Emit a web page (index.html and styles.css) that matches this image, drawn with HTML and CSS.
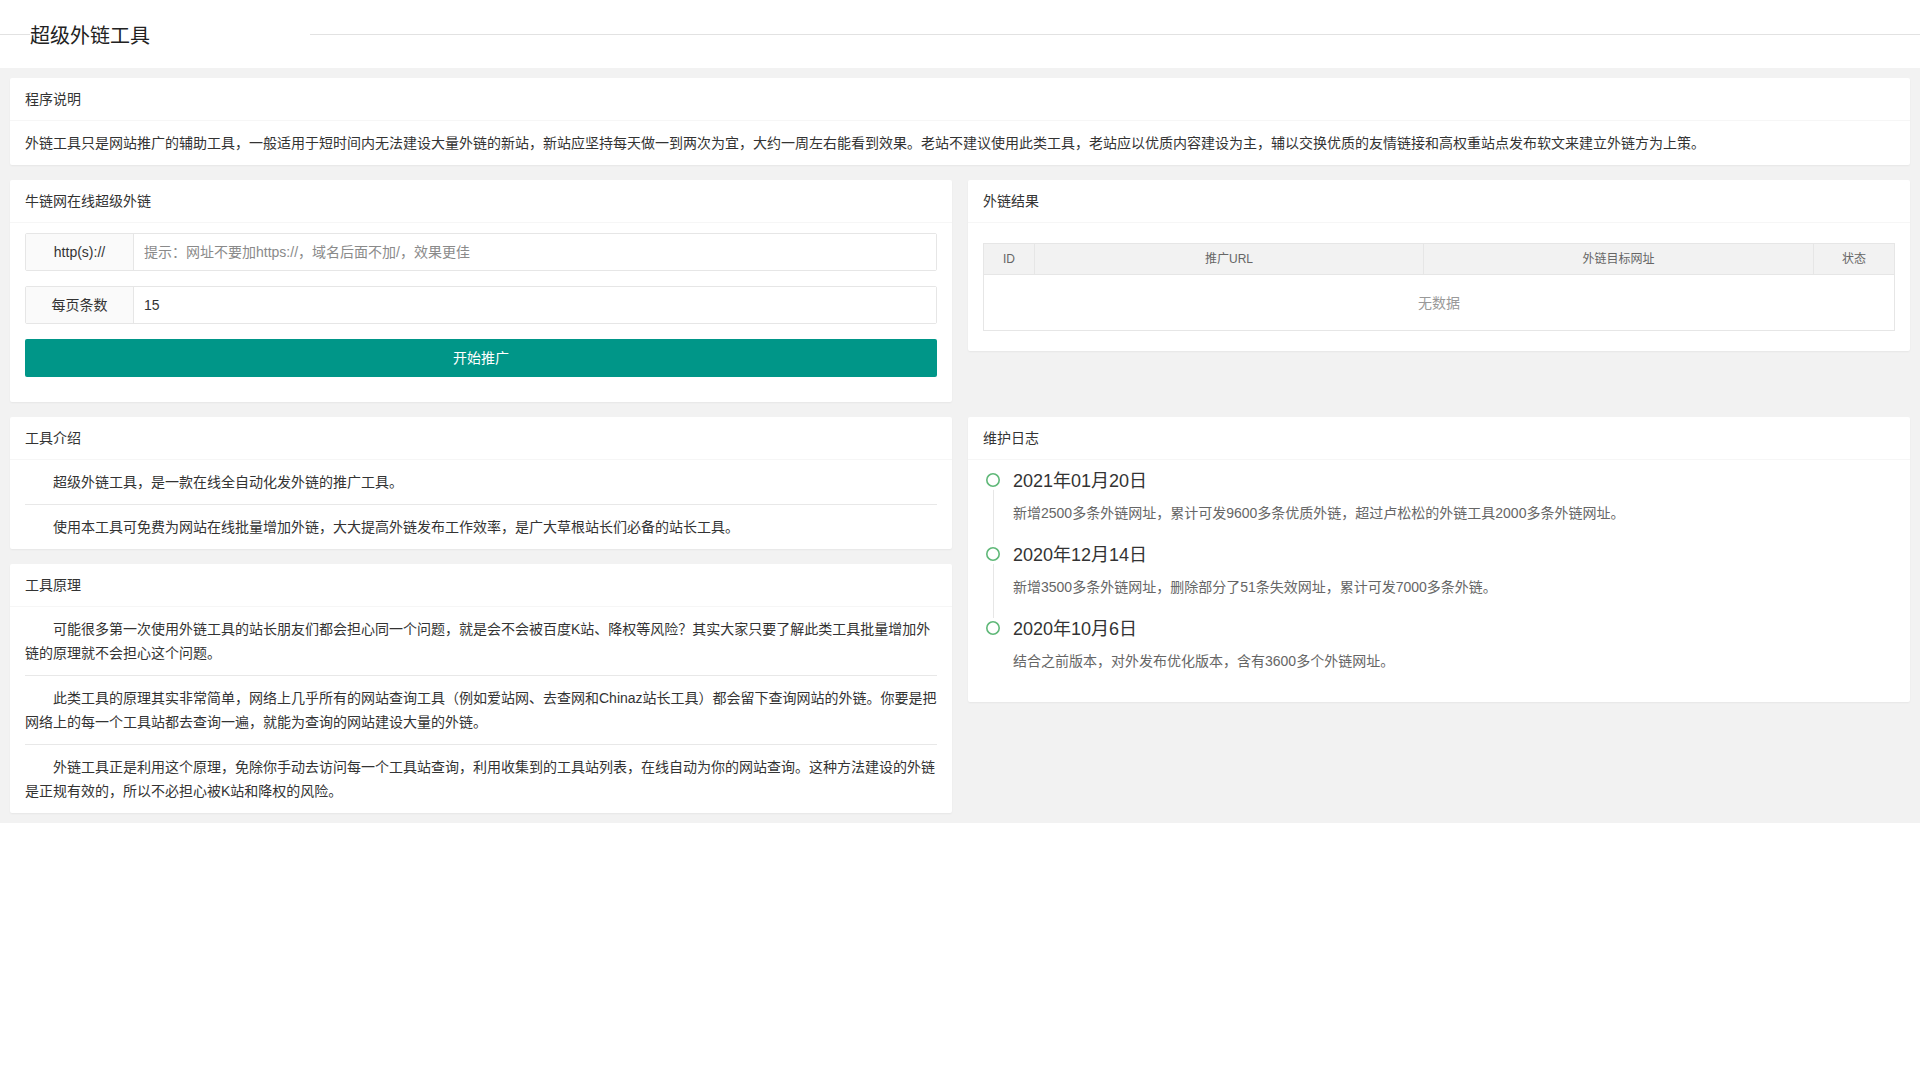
FILE: index.html
```html
<!DOCTYPE html>
<html lang="zh-CN">
<head>
<meta charset="utf-8">
<title>超级外链工具</title>
<link rel="stylesheet" href="styles.css">
</head>
<body>
<header class="topbar">
  <div class="brand">超级外链工具</div>
</header>
<main class="page">
  <section class="card">
    <div class="card-header">程序说明</div>
    <div class="card-body">外链工具只是网站推广的辅助工具，一般适用于短时间内无法建设大量外链的新站，新站应坚持每天做一到两次为宜，大约一周左右能看到效果。老站不建议使用此类工具，老站应以优质内容建设为主，辅以交换优质的友情链接和高权重站点发布软文来建立外链方为上策。</div>
  </section>

  <div class="grid">
    <section class="card">
      <div class="card-header">牛链网在线超级外链</div>
      <div class="card-body form-body">
        <div class="input-group">
          <span class="input-label">http(s)://</span>
          <input class="input" type="text" placeholder="提示：网址不要加https://，域名后面不加/，效果更佳">
        </div>
        <div class="input-group">
          <span class="input-label">每页条数</span>
          <input class="input" type="text" value="15">
        </div>
        <button class="btn" type="button">开始推广</button>
      </div>
    </section>

    <section class="card">
      <div class="card-header">外链结果</div>
      <div class="card-body">
        <table class="table">
          <colgroup>
            <col class="c-id"><col class="c-url"><col class="c-target"><col class="c-status">
          </colgroup>
          <thead>
            <tr><th>ID</th><th>推广URL</th><th>外链目标网址</th><th>状态</th></tr>
          </thead>
          <tbody>
            <tr><td class="empty" colspan="4">无数据</td></tr>
          </tbody>
        </table>
      </div>
    </section>

    <div class="col">
      <section class="card">
        <div class="card-header">工具介绍</div>
        <div class="card-body list-body">
          <p>超级外链工具，是一款在线全自动化发外链的推广工具。</p>
          <p>使用本工具可免费为网站在线批量增加外链，大大提高外链发布工作效率，是广大草根站长们必备的站长工具。</p>
        </div>
      </section>
      <section class="card">
        <div class="card-header">工具原理</div>
        <div class="card-body list-body">
          <p>可能很多第一次使用外链工具的站长朋友们都会担心同一个问题，就是会不会被百度K站、降权等风险？其实大家只要了解此类工具批量增加外链的原理就不会担心这个问题。</p>
          <p>此类工具的原理其实非常简单，网络上几乎所有的网站查询工具（例如爱站网、去查网和Chinaz站长工具）都会留下查询网站的外链。你要是把网络上的每一个工具站都去查询一遍，就能为查询的网站建设大量的外链。</p>
          <p>外链工具正是利用这个原理，免除你手动去访问每一个工具站查询，利用收集到的工具站列表，在线自动为你的网站查询。这种方法建设的外链是正规有效的，所以不必担心被K站和降权的风险。</p>
        </div>
      </section>
    </div>

    <section class="card">
      <div class="card-header">维护日志</div>
      <div class="card-body">
        <ul class="timeline">
          <li class="tl-item">
            <span class="tl-axis"><svg width="20" height="20" viewBox="0 0 20 20"><circle cx="10" cy="10" r="6.2" fill="none" stroke="#5FB878" stroke-width="1.6"/></svg></span>
            <div class="tl-content">
              <h3 class="tl-title">2021年01月20日</h3>
              <p class="tl-text">新增2500多条外链网址，累计可发9600多条优质外链，超过卢松松的外链工具2000多条外链网址。</p>
            </div>
          </li>
          <li class="tl-item">
            <span class="tl-axis"><svg width="20" height="20" viewBox="0 0 20 20"><circle cx="10" cy="10" r="6.2" fill="none" stroke="#5FB878" stroke-width="1.6"/></svg></span>
            <div class="tl-content">
              <h3 class="tl-title">2020年12月14日</h3>
              <p class="tl-text">新增3500多条外链网址，删除部分了51条失效网址，累计可发7000多条外链。</p>
            </div>
          </li>
          <li class="tl-item">
            <span class="tl-axis"><svg width="20" height="20" viewBox="0 0 20 20"><circle cx="10" cy="10" r="6.2" fill="none" stroke="#5FB878" stroke-width="1.6"/></svg></span>
            <div class="tl-content">
              <h3 class="tl-title">2020年10月6日</h3>
              <p class="tl-text">结合之前版本，对外发布优化版本，含有3600多个外链网址。</p>
            </div>
          </li>
        </ul>
      </div>
    </section>
  </div>
</main>
</body>
</html>
```

FILE: styles.css
```css
* { box-sizing: border-box; }
html, body {
  margin: 0;
  padding: 0;
  background: #fff;
  font-family: "Liberation Sans", "Noto Sans CJK SC", sans-serif;
  font-size: 14px;
  color: #333;
}

.topbar {
  height: 68px;
  background: linear-gradient(to bottom, #fff 0, #fff 34px, #e2e2e2 34px, #e2e2e2 35px, #fff 35px, #fff 100%);
}
.brand {
  margin-left: 30px;
  padding-top: 24px;
  width: 280px;
  height: 48px;
  line-height: 24px;
  font-size: 20px;
  color: #222;
  background: #fff;
}

.page {
  background: #f2f2f2;
  padding: 10px;
  display: flex;
  flex-direction: column;
  gap: 15px;
}

.grid {
  display: grid;
  grid-template-columns: 1fr 1fr;
  column-gap: 16px;
  row-gap: 15px;
  align-items: start;
}
.col {
  display: flex;
  flex-direction: column;
  gap: 15px;
}

.card {
  background: #fff;
  border-radius: 2px;
  box-shadow: 0 1px 2px 0 rgba(0, 0, 0, 0.05);
}
.card-header {
  height: 43px;
  line-height: 42px;
  padding: 0 15px;
  border-bottom: 1px solid #f6f6f6;
  color: #333;
  font-size: 14px;
}
.card-body {
  padding: 10px 15px;
  line-height: 24px;
}

/* form */
.input-group {
  display: flex;
  height: 38px;
  border: 1px solid #e6e6e6;
  border-radius: 2px;
  margin-bottom: 15px;
}
.input-label {
  flex: 0 0 108px;
  background: #fafafa;
  border-right: 1px solid #e6e6e6;
  text-align: center;
  line-height: 36px;
  color: #333;
}
.input {
  flex: 1;
  border: 0;
  outline: none;
  padding: 0 10px;
  font: inherit;
  color: #333;
  background: #fff;
}
.input::placeholder { color: #8a8a8a; }
.btn {
  display: block;
  width: 100%;
  height: 38px;
  border: 0;
  border-radius: 2px;
  background: #009688;
  color: #fff;
  font: inherit;
  margin-bottom: 15px;
}

/* table */
.table {
  width: 100%;
  margin: 10px 0;
  border-collapse: collapse;
  table-layout: fixed;
  border: 1px solid #e6e6e6;
}
.c-id { width: 51px; }
.c-url { width: 389px; }
.c-target { width: 390px; }
.c-status { width: 81px; }
.table th {
  height: 31px;
  background: #f2f2f2;
  border: 1px solid #e6e6e6;
  font-weight: normal;
  font-size: 12px;
  color: #666;
  text-align: center;
  padding: 0;
}
.table td.empty {
  height: 56px;
  text-align: center;
  color: #999;
  font-size: 14px;
}

/* lists */
.list-body { padding: 0 15px; }
.list-body p {
  margin: 0;
  padding: 10px 0;
  text-indent: 2em;
  line-height: 24px;
  border-bottom: 1px solid #e8e8e8;
}
.list-body p:last-child { border-bottom: 0; }

/* timeline */
.timeline {
  list-style: none;
  margin: 0;
  padding: 0 0 0 5px;
}
.tl-item {
  position: relative;
  padding-bottom: 20px;
}
.tl-item::before {
  content: "";
  position: absolute;
  left: 5px;
  top: 0;
  width: 1px;
  height: 100%;
  background: #e6e6e6;
}
.tl-item:last-child::before { display: none; }
.tl-axis {
  position: absolute;
  left: -5px;
  top: 0;
  width: 20px;
  height: 20px;
  background: #fff;
  border-radius: 50%;
  z-index: 1;
}
.tl-axis svg { display: block; }
.tl-content { padding-left: 25px; }
.tl-title {
  margin: 0 0 10px;
  font-size: 18px;
  font-weight: normal;
  line-height: 22px;
  color: #333;
}
.tl-text {
  margin: 0;
  line-height: 22px;
  color: #666;
}
```
